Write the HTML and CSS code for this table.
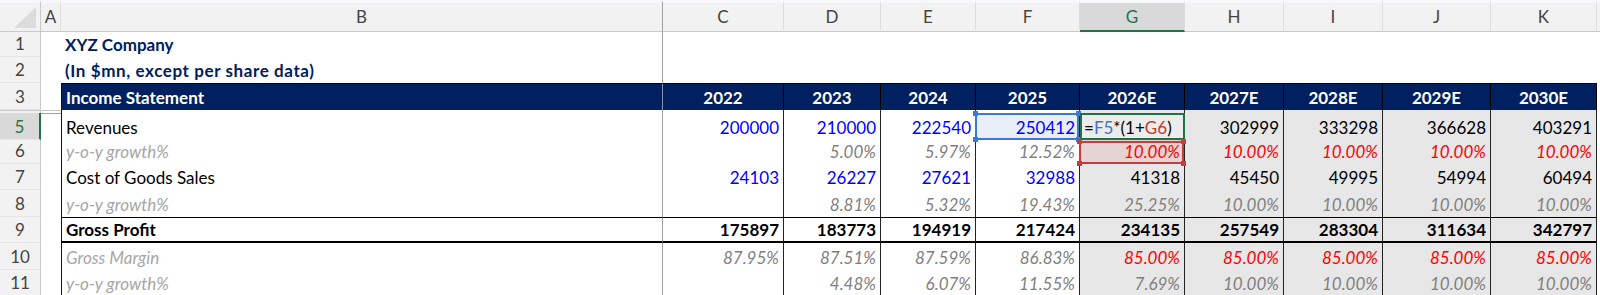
FILE: index.html
```html
<!DOCTYPE html>
<html lang="en">
<head>
    <meta charset="UTF-8">
    <title>Income Statement</title>
    <link rel="stylesheet" href="styles.css">
</head>
<body>
    <div class="sheet">
        <!-- column headers -->
        <div class="corner"><span class="tri"></span></div>
        <div class="hd">A</div>
        <div class="hd frz">B</div>
        <div class="hd">C</div>
        <div class="hd">D</div>
        <div class="hd">E</div>
        <div class="hd">F</div>
        <div class="hd sel">G</div>
        <div class="hd">H</div>
        <div class="hd">I</div>
        <div class="hd">J</div>
        <div class="hd">K</div>
        <div class="hd last"></div>

        <!-- row 1 -->
        <div class="rn">1</div>
        <div class="c"></div>
        <div class="c lbl frz title">XYZ Company</div>
        <div class="c"></div><div class="c"></div><div class="c"></div><div class="c"></div>
        <div class="c"></div><div class="c"></div><div class="c"></div><div class="c"></div><div class="c"></div>
        <div class="c"></div>

        <!-- row 2 -->
        <div class="rn">2</div>
        <div class="c"></div>
        <div class="c lbl frz title wide">(In $mn, except per share data)</div>
        <div class="c"></div><div class="c"></div><div class="c"></div><div class="c"></div>
        <div class="c"></div><div class="c"></div><div class="c"></div><div class="c"></div><div class="c"></div>
        <div class="c"></div>

        <!-- row 3 -->
        <div class="rn">3</div>
        <div class="c"></div>
        <div class="c lbl frz band edge">Income Statement</div>
        <div class="c yr band">2022</div>
        <div class="c yr band">2023</div>
        <div class="c yr band">2024</div>
        <div class="c yr band">2025</div>
        <div class="c yr band">2026E</div>
        <div class="c yr band">2027E</div>
        <div class="c yr band">2028E</div>
        <div class="c yr band">2029E</div>
        <div class="c yr band">2030E</div>
        <div class="c"></div>

        <!-- row 4 (hidden) -->
        <div class="rn hid"></div>
        <div class="c hid"></div>
        <div class="c frz edge"></div>
        <div class="c vr"></div><div class="c vr"></div><div class="c vr"></div><div class="c vr"></div>
        <div class="c vr fc"></div><div class="c vr fc"></div><div class="c vr fc"></div><div class="c vr fc"></div><div class="c vr fc"></div>
        <div class="c"></div>

        <!-- row 5 -->
        <div class="rn sel">5</div>
        <div class="c"></div>
        <div class="c lbl frz edge">Revenues</div>
        <div class="c num vr inp">200000</div>
        <div class="c num vr inp">210000</div>
        <div class="c num vr inp">222540</div>
        <div class="c num vr inp ref-blue">250412<span class="box blue"><i class="h tl"></i><i class="h tr"></i><i class="h bl"></i><i class="h br"></i></span></div>
        <div class="c vr fc editing">=<span class="f-blue">F5</span>*(1+<span class="f-red">G6</span>)<span class="box green"></span></div>
        <div class="c num vr fc">302999</div>
        <div class="c num vr fc">333298</div>
        <div class="c num vr fc">366628</div>
        <div class="c num vr fc">403291</div>
        <div class="c"></div>

        <!-- row 6 -->
        <div class="rn">6</div>
        <div class="c"></div>
        <div class="c lbl frz edge note">y-o-y growth%</div>
        <div class="c num vr"></div>
        <div class="c num vr pct">5.00%</div>
        <div class="c num vr pct">5.97%</div>
        <div class="c num vr pct">12.52%</div>
        <div class="c num vr fc drv ref-red">10.00%<span class="box red"><i class="h tl"></i><i class="h tr"></i><i class="h bl"></i><i class="h br"></i></span></div>
        <div class="c num vr fc drv">10.00%</div>
        <div class="c num vr fc drv">10.00%</div>
        <div class="c num vr fc drv">10.00%</div>
        <div class="c num vr fc drv">10.00%</div>
        <div class="c"></div>

        <!-- row 7 -->
        <div class="rn">7</div>
        <div class="c"></div>
        <div class="c lbl frz edge">Cost of Goods Sales</div>
        <div class="c num vr inp">24103</div>
        <div class="c num vr inp">26227</div>
        <div class="c num vr inp">27621</div>
        <div class="c num vr inp">32988</div>
        <div class="c num vr fc">41318</div>
        <div class="c num vr fc">45450</div>
        <div class="c num vr fc">49995</div>
        <div class="c num vr fc">54994</div>
        <div class="c num vr fc">60494</div>
        <div class="c"></div>

        <!-- row 8 -->
        <div class="rn">8</div>
        <div class="c"></div>
        <div class="c lbl frz edge note">y-o-y growth%</div>
        <div class="c num vr"></div>
        <div class="c num vr pct">8.81%</div>
        <div class="c num vr pct">5.32%</div>
        <div class="c num vr pct">19.43%</div>
        <div class="c num vr fc pct">25.25%</div>
        <div class="c num vr fc pct">10.00%</div>
        <div class="c num vr fc pct">10.00%</div>
        <div class="c num vr fc pct">10.00%</div>
        <div class="c num vr fc pct">10.00%</div>
        <div class="c"></div>

        <!-- row 9 -->
        <div class="rn">9</div>
        <div class="c"></div>
        <div class="c lbl frz edge gp total">Gross Profit</div>
        <div class="c num vr gp total">175897</div>
        <div class="c num vr gp total">183773</div>
        <div class="c num vr gp total">194919</div>
        <div class="c num vr gp total">217424</div>
        <div class="c num vr fc gp total">234135</div>
        <div class="c num vr fc gp total">257549</div>
        <div class="c num vr fc gp total">283304</div>
        <div class="c num vr fc gp total">311634</div>
        <div class="c num vr fc gp total">342797</div>
        <div class="c"></div>

        <!-- row 10 -->
        <div class="rn">10</div>
        <div class="c"></div>
        <div class="c lbl frz edge note">Gross Margin</div>
        <div class="c num vr pct">87.95%</div>
        <div class="c num vr pct">87.51%</div>
        <div class="c num vr pct">87.59%</div>
        <div class="c num vr pct">86.83%</div>
        <div class="c num vr fc drv">85.00%</div>
        <div class="c num vr fc drv">85.00%</div>
        <div class="c num vr fc drv">85.00%</div>
        <div class="c num vr fc drv">85.00%</div>
        <div class="c num vr fc drv">85.00%</div>
        <div class="c"></div>

        <!-- row 11 -->
        <div class="rn">11</div>
        <div class="c"></div>
        <div class="c lbl frz edge note">y-o-y growth%</div>
        <div class="c num vr"></div>
        <div class="c num vr pct">4.48%</div>
        <div class="c num vr pct">6.07%</div>
        <div class="c num vr pct">11.55%</div>
        <div class="c num vr fc pct">7.69%</div>
        <div class="c num vr fc pct">10.00%</div>
        <div class="c num vr fc pct">10.00%</div>
        <div class="c num vr fc pct">10.00%</div>
        <div class="c num vr fc pct">10.00%</div>
        <div class="c"></div>
    </div>
</body>
</html>
```

FILE: styles.css
```css
body {
    margin: 0;
    background-color: #fff;
    font-family: Lato, "Open Sans", sans-serif;
    font-size: 17px;
    color: #000;
    overflow: hidden;
}
.sheet {
    display: grid;
    grid-template-columns: 41px 20px 602px 121px 97px 95px 104px 105px 99px 99px 108px 106px 3px;
    grid-template-rows: 32px 25px 26px 27px 3px 27px 24px 26px 27px 26px 27px 26px;
    width: 1600px;
}
.sheet > div {
    box-sizing: border-box;
    line-height: 20px;
    white-space: nowrap;
}

/* headers */
.corner {
    position: relative;
    background-color: #f2f2f2;
    border-right: 1px solid #c8c8c8;
    border-bottom: 1px solid #c8c8c8;
    border-top: 3px solid #f7f8fa;
}
.tri {
    position: absolute;
    right: 4px;
    bottom: 3px;
    width: 0;
    height: 0;
    border-left: 22px solid transparent;
    border-bottom: 21px solid #dcdcdc;
}
.hd {
    display: flex;
    align-items: flex-end;
    justify-content: center;
    padding-bottom: 4px;
    background-color: #f2f2f2;
    border-top: 3px solid #f7f8fa;
    border-right: 1px solid #dedede;
    border-bottom: 1px solid #c8c8c8;
    color: #444;
}
.hd.sel {
    background-color: #d9d9d9;
    color: #217346;
    border-bottom: 2px solid #217346;
    padding-bottom: 3px;
}
.hd.frz {
    border-right: 1px solid #a0a0a0;
}
.hd.last {
    border-right: none;
}
.rn {
    display: flex;
    align-items: flex-end;
    justify-content: center;
    padding-bottom: 2px;
    background-color: #f2f2f2;
    border-right: 1px solid #c8c8c8;
    border-bottom: 1px solid #e6e6e6;
    color: #444;
}
.rn.sel {
    background-color: #d9d9d9;
    color: #217346;
    border-right: 2px solid #217346;
}
.rn.hid, .c.hid {
    border-bottom: 1px solid #a0a0a0;
    border-top: 1px solid #c8c8c8;
}

/* cells */
.c {
    display: flex;
    align-items: flex-end;
    padding: 0 4px 2px 4px;
}
.num {
    justify-content: flex-end;
}
.yr {
    justify-content: center;
}
.frz {
    border-right: 1px solid #a0a0a0;
}
.edge {
    border-left: 1px solid #111;
}
.vr {
    border-right: 1px solid #222;
}
.band {
    background-color: #002060;
    color: #fff;
    font-weight: bold;
    border-top: 1px solid #000;
    border-right: 1px solid #000;
}
.band.frz {
    border-right: 1px solid #8a8fa0;
}
.title {
    color: #002060;
    font-weight: bold;
}
.title.wide {
    letter-spacing: 0.6px;
}
.note {
    color: #a6a6a6;
    font-style: italic;
}
.fc {
    background-color: #e7e7e7;
}
.inp {
    color: #0000ff;
}
.pct {
    color: #7f7f7f;
    font-style: italic;
}
.drv {
    color: #ff0000;
    font-style: italic;
}
.total {
    font-weight: bold;
}
.gp {
    border-top: 1px solid #000;
    border-bottom: 2px solid #000;
    padding-bottom: 1px;
}

/* formula editing / reference boxes */
.ref-blue, .ref-red, .editing {
    position: relative;
}
.ref-blue {
    background-color: #e8eef8;
}
.ref-red {
    background-color: #e6d3d3;
}
.editing {
    background-color: #ececec;
    padding-left: 4px;
}
.f-blue {
    color: #4472c4;
}
.f-red {
    color: #c0392b;
}
.box {
    position: absolute;
    left: -1px;
    top: 0;
    right: 0;
    bottom: 0;
    border: 2px solid;
}
.box.blue {
    border-color: #3b78d8;
}
.box.red {
    border-color: #cc3a3a;
    top: 1px;
}
.box.green {
    border-color: #217346;
    left: 0;
    right: -1px;
}
.h {
    position: absolute;
    width: 5px;
    height: 5px;
}
.box.blue .h {
    background-color: #3b78d8;
}
.box.red .h {
    background-color: #cc3a3a;
}
.tl { left: -4px; top: -4px; }
.tr { right: -4px; top: -4px; }
.bl { left: -4px; bottom: -4px; }
.br { right: -4px; bottom: -4px; }
```
